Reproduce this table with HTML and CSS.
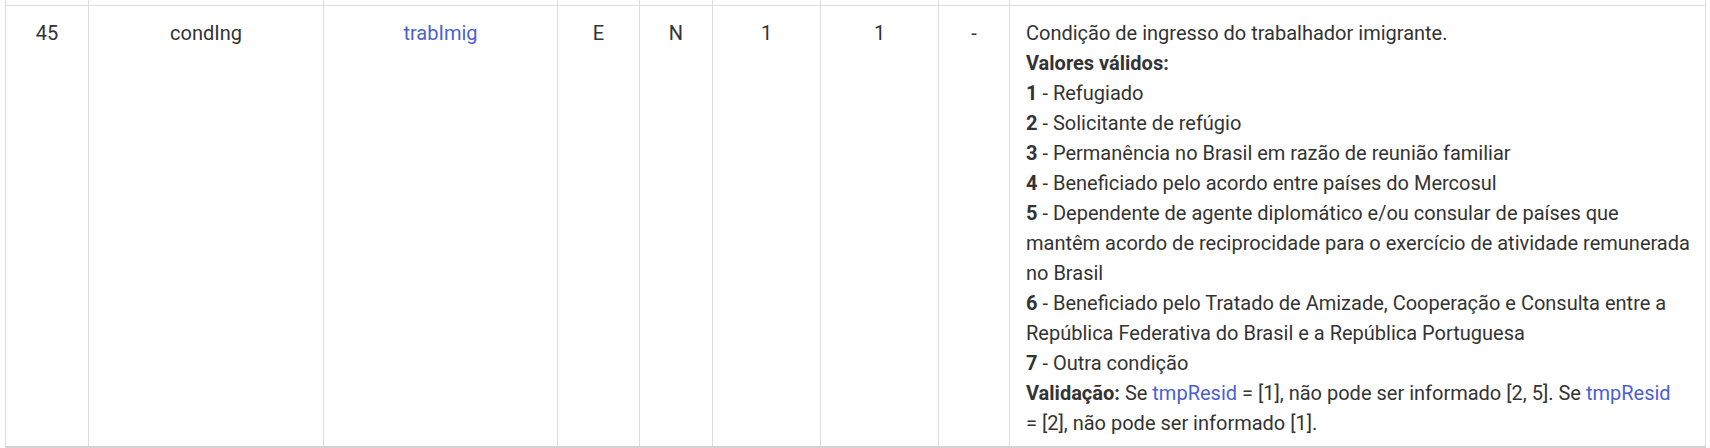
FILE: index.html
```html
<!DOCTYPE html>
<html lang="pt-BR">
<head>
<meta charset="utf-8">
<title>condIng</title>
<link rel="stylesheet" href="styles.css">
</head>
<body>
<div class="wrap">
<table class="layout">
  <colgroup>
    <col class="c-seq"><col class="c-name"><col class="c-pai"><col class="c-elem"><col class="c-tipo"><col class="c-ocor"><col class="c-tam"><col class="c-dec"><col class="c-desc">
  </colgroup>
  <tbody>
    <tr class="prev">
      <td></td><td></td><td></td><td></td><td></td><td></td><td></td><td></td><td></td>
    </tr>
    <tr>
      <td>45</td>
      <td>condIng</td>
      <td><a class="ref" href="#">trabImig</a></td>
      <td>E</td>
      <td>N</td>
      <td>1</td>
      <td>1</td>
      <td>-</td>
      <td class="desc">
        Condição de ingresso do trabalhador imigrante.<br>
        <strong>Valores válidos:</strong><br>
        <strong>1</strong> - Refugiado<br>
        <strong>2</strong> - Solicitante de refúgio<br>
        <strong>3</strong> - Permanência no Brasil em razão de reunião familiar<br>
        <strong>4</strong> - Beneficiado pelo acordo entre países do Mercosul<br>
        <strong>5</strong> - Dependente de agente diplomático e/ou consular de países que mantêm acordo de reciprocidade para o exercício de atividade remunerada no Brasil<br>
        <strong>6</strong> - Beneficiado pelo Tratado de Amizade, Cooperação e Consulta entre a República Federativa do Brasil e a República Portuguesa<br>
        <strong>7</strong> - Outra condição<br>
        <strong>Validação:</strong> Se <a class="ref" href="#">tmpResid</a> = [1], não pode ser informado [2, 5]. Se <a class="ref" href="#">tmpResid</a> =&nbsp;[2], não pode ser informado [1].
      </td>
    </tr>
  </tbody>
</table>
</div>
</body>
</html>
```
FILE: styles.css
```css
html, body {
  margin: 0;
  padding: 0;
  background: #ffffff;
}
body {
  font-family: Roboto, "Liberation Sans", sans-serif;
  font-size: 20px;
  line-height: 30px;
  color: #333333;
}
.wrap {
  padding: 0 4px 0 5px;
}
.layout {
  width: 100%;
  table-layout: fixed;
  border-collapse: collapse;
}
.c-seq { width: 83px; }
.c-name { width: 235px; }
.c-pai { width: 234px; }
.c-elem { width: 82px; }
.c-tipo { width: 73px; }
.c-ocor { width: 108px; }
.c-tam { width: 118px; }
.c-dec { width: 71px; }
.c-desc { width: auto; }
.layout td {
  border: 1px solid #dddddd;
  padding: 12px 16px 8px;
  text-align: center;
  vertical-align: top;
}
.layout tr:last-child td {
  border-bottom: 2px solid #d4d4d4;
}
.layout .prev td {
  border-top: 0;
  height: 5px;
  padding: 0;
  line-height: 0;
  font-size: 0;
}
.layout td.desc {
  text-align: left;
  padding-right: 13px;
}
strong {
  font-weight: 700;
}
.ref {
  color: #4b5fd2;
  text-decoration: none;
}
```
